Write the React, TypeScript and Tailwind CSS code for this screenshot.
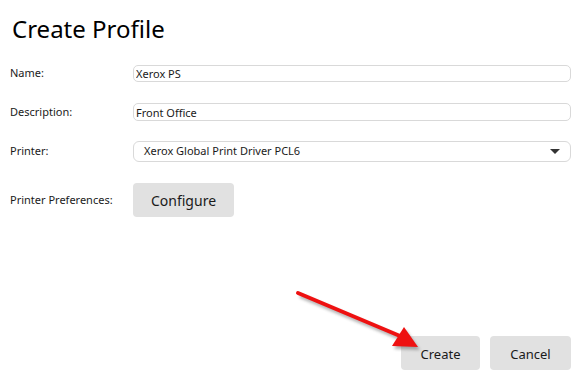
import React from "react";

const font = { fontFamily: '"Noto Sans", "Open Sans", sans-serif' };

const FieldRow: React.FC<{ label: string; children: React.ReactNode; className?: string }> = (props) => (
  <div className={`flex items-center ${props.className ?? ""}`}>
    <label className="w-[123px] shrink-0 text-[11px] text-[#1a1a1a]">{props.label}</label>
    {props.children}
  </div>
);

export default function App() {
  return (
    <div
      className="relative h-[377px] w-[582px] bg-white flex flex-col pl-[10px] pr-[11px] overflow-hidden"
      style={font}
    >
      <h1 className="text-[24px] leading-none text-black pt-[17px] pl-[2px]">Create Profile</h1>

      <FieldRow label="Name:" className="mt-[24px]">
        <input
          readOnly
          value="Xerox PS"
          className="flex-1 h-[17px] border border-[#d9d9d9] rounded-[5px] px-[2px] text-[11px] text-[#1a1a1a] outline-none"
        />
      </FieldRow>

      <FieldRow label="Description:" className="mt-[21px]">
        <input
          readOnly
          value="Front Office"
          className="flex-1 h-[18px] border border-[#d9d9d9] rounded-[5px] px-[2px] text-[11px] text-[#1a1a1a] outline-none"
        />
      </FieldRow>

      <FieldRow label="Printer:" className="mt-[20px]">
        <div className="flex-1 h-[21px] border border-[#d9d9d9] rounded-[6px] flex items-center justify-between pl-[10px] pr-[10px]">
          <span className="text-[11px] text-[#1a1a1a]">Xerox Global Print Driver PCL6</span>
          <svg width="10" height="6" viewBox="0 0 10 6">
            <path d="M0 0 H10 L5 5 Z" fill="#333" />
          </svg>
        </div>
      </FieldRow>

      <FieldRow label="Printer Preferences:" className="mt-[21px]">
        <button className="w-[101px] h-[34px] pt-[1px] bg-[#e1e1e1] rounded-[4px] text-[14px] text-[#1a1a1a]">Configure</button>
      </FieldRow>

      <div className="mt-auto mb-[7px] flex justify-end gap-[10px]">
        <button className="w-[79px] h-[34px] pt-[3px] bg-[#e1e1e1] rounded-[4px] text-[13px] text-[#1a1a1a]">Create</button>
        <button className="w-[81px] h-[34px] pt-[3px] bg-[#e1e1e1] rounded-[4px] text-[13px] text-[#1a1a1a]">Cancel</button>
      </div>

      <svg className="absolute left-0 top-0 pointer-events-none" width="582" height="377" viewBox="0 0 582 377">
        <defs>
          <filter id="sh" x="-20%" y="-20%" width="140%" height="140%">
            <feGaussianBlur stdDeviation="1.5" />
          </filter>
        </defs>
        <g opacity="0.45" filter="url(#sh)" transform="translate(2,3)">
          <line x1="298" y1="293" x2="400" y2="336" stroke="#555" strokeWidth="4" />
          <polygon points="418,347 392,346 404,327" fill="#555" />
        </g>
        <line x1="298" y1="293" x2="400" y2="336" stroke="#ee1111" strokeWidth="4" strokeLinecap="round" />
        <polygon points="418,347 392,346 404,327" fill="#ee1111" />
      </svg>
    </div>
  );
}
